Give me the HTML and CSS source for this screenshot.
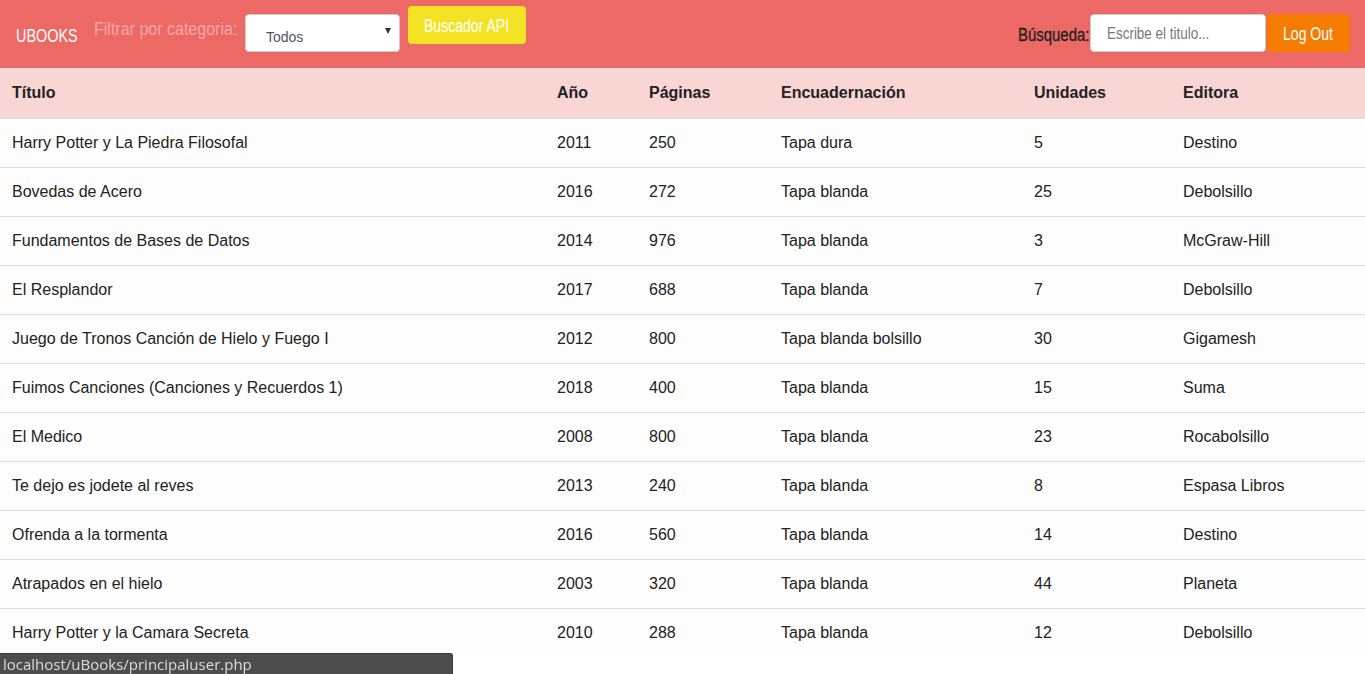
FILE: index.html
```html
<!DOCTYPE html>
<html lang="es">
<head>
<meta charset="utf-8">
<title>uBooks</title>
<link rel="stylesheet" href="styles.css">
</head>
<body>
<nav class="navbar">
  <div class="nav-left">
    <span class="brand"><span class="cond">UBOOKS</span></span>
    <span class="filter-label"><span class="cond cond-wide">Filtrar por categoria:</span></span>
    <div class="select">
      <span class="select-text">Todos</span>
      <span class="select-arrow"></span>
    </div>
    <button class="btn btn-api"><span class="cond-c">Buscador API</span></button>
  </div>
  <div class="nav-right">
    <span class="search-label"><span class="cond">Búsqueda:</span></span>
    <div class="search-input"><span class="placeholder">Escribe el titulo...</span></div>
    <button class="btn btn-logout"><span class="cond-c">Log Out</span></button>
  </div>
</nav>
<table class="books">
  <colgroup>
    <col class="c-title"><col class="c-year"><col class="c-pages"><col class="c-bind"><col class="c-units"><col class="c-pub">
  </colgroup>
  <thead>
    <tr><th>Título</th><th>Año</th><th>Páginas</th><th>Encuadernación</th><th>Unidades</th><th>Editora</th></tr>
  </thead>
  <tbody>
    <tr><td>Harry Potter y La Piedra Filosofal</td><td>2011</td><td>250</td><td>Tapa dura</td><td>5</td><td>Destino</td></tr>
    <tr><td>Bovedas de Acero</td><td>2016</td><td>272</td><td>Tapa blanda</td><td>25</td><td>Debolsillo</td></tr>
    <tr><td>Fundamentos de Bases de Datos</td><td>2014</td><td>976</td><td>Tapa blanda</td><td>3</td><td>McGraw-Hill</td></tr>
    <tr><td>El Resplandor</td><td>2017</td><td>688</td><td>Tapa blanda</td><td>7</td><td>Debolsillo</td></tr>
    <tr><td>Juego de Tronos Canción de Hielo y Fuego I</td><td>2012</td><td>800</td><td>Tapa blanda bolsillo</td><td>30</td><td>Gigamesh</td></tr>
    <tr><td>Fuimos Canciones (Canciones y Recuerdos 1)</td><td>2018</td><td>400</td><td>Tapa blanda</td><td>15</td><td>Suma</td></tr>
    <tr><td>El Medico</td><td>2008</td><td>800</td><td>Tapa blanda</td><td>23</td><td>Rocabolsillo</td></tr>
    <tr><td>Te dejo es jodete al reves</td><td>2013</td><td>240</td><td>Tapa blanda</td><td>8</td><td>Espasa Libros</td></tr>
    <tr><td>Ofrenda a la tormenta</td><td>2016</td><td>560</td><td>Tapa blanda</td><td>14</td><td>Destino</td></tr>
    <tr><td>Atrapados en el hielo</td><td>2003</td><td>320</td><td>Tapa blanda</td><td>44</td><td>Planeta</td></tr>
    <tr><td>Harry Potter y la Camara Secreta</td><td>2010</td><td>288</td><td>Tapa blanda</td><td>12</td><td>Debolsillo</td></tr>
  </tbody>
</table>
<div class="statusbar">localhost/uBooks/principaluser.php</div>
</body>
</html>
```

FILE: styles.css
```css
html, body {
  margin: 0;
  padding: 0;
  background: #ffffff;
  overflow: hidden;
}
body {
  font-family: "Liberation Sans", Arial, sans-serif;
  font-size: 16px;
  color: #222;
}
.cond {
  display: inline-block;
  white-space: nowrap;
  transform: scaleX(0.8);
  transform-origin: left center;
}
.cond-wide {
  transform: scaleX(0.89);
}
.cond-c {
  display: inline-block;
  white-space: nowrap;
  transform: scaleX(0.78);
  transform-origin: center center;
}
.navbar {
  height: 68px;
  background: #ed6965;
  display: flex;
  justify-content: space-between;
  align-items: flex-start;
}
.nav-left {
  display: flex;
  align-items: flex-start;
  padding-left: 16px;
}
.brand {
  color: #fff;
  font-size: 18px;
  line-height: 22px;
  margin-top: 25px;
  width: 78px;
  white-space: nowrap;
}
.filter-label {
  color: #f6a6a4;
  font-size: 18px;
  line-height: 22px;
  margin-top: 18px;
  width: 151px;
  white-space: nowrap;
}
.select {
  width: 155px;
  height: 38px;
  margin-top: 14px;
  box-sizing: border-box;
  background: #fff;
  border: 1px solid #ccc;
  border-radius: 4px;
  display: flex;
  align-items: center;
  justify-content: space-between;
  padding: 7px 8px 0 20px;
}
.select-text {
  color: #4c5662;
  font-size: 14px;
}
.select-arrow {
  width: 0;
  height: 0;
  border-left: 3.5px solid transparent;
  border-right: 3.5px solid transparent;
  border-top: 6px solid #333;
  margin-top: -12px;
}
.btn {
  border: 0;
  color: #fff;
  font-family: "Liberation Sans", sans-serif;
  font-size: 18px;
  border-radius: 4px;
  padding: 0;
  cursor: pointer;
  white-space: nowrap;
}
.btn-api {
  background: #f4e324;
  width: 118px;
  height: 38px;
  margin-top: 6px;
  margin-left: 8px;
  padding-top: 3px;
}
.nav-right {
  display: flex;
  align-items: flex-start;
  padding-right: 15px;
}
.search-label {
  color: #222;
  font-size: 18px;
  line-height: 22px;
  margin-top: 24px;
  width: 72px;
  white-space: nowrap;
  -webkit-text-stroke: 0.3px #222;
}
.search-label .cond {
  transform: scaleX(0.83);
}
.search-input {
  width: 176px;
  height: 38px;
  margin-top: 14px;
  box-sizing: border-box;
  background: #fff;
  border: 1px solid #ccc;
  border-radius: 4px;
  display: flex;
  align-items: center;
  padding-left: 16px;
  padding-top: 2px;
}
.placeholder {
  display: inline-block;
  color: #777;
  font-size: 16px;
  white-space: nowrap;
  transform: scaleX(0.84);
  transform-origin: left center;
}
.btn-logout {
  background: #f47c00;
  width: 83px;
  height: 38px;
  margin-top: 14px;
  margin-left: 1px;
  padding-top: 2px;
}
.books {
  width: 100%;
  border-collapse: collapse;
  table-layout: fixed;
}
.c-title { width: 545px; }
.c-year { width: 92px; }
.c-pages { width: 132px; }
.c-bind { width: 253px; }
.c-units { width: 149px; }
.c-pub { width: auto; }
.books th, .books td {
  text-align: left;
  padding: 13px 12px;
  line-height: 22px;
  white-space: nowrap;
}
.books th {
  background: #f9d5d4;
  font-weight: bold;
  color: #222;
  border-top: 1px solid #ddd;
  border-bottom: 2px solid #ddd;
}
.books td {
  border-top: 1px solid #ddd;
  background: #fdfdfd;
}
.books tbody tr:first-child td {
  border-top: 0;
}
.statusbar {
  position: fixed;
  left: 0;
  bottom: 0;
  width: 453px;
  height: 21px;
  box-sizing: border-box;
  background: #4d4d4d;
  color: #dcdcdc;
  font-family: "Open Sans", "DejaVu Sans", sans-serif;
  font-size: 15px;
  line-height: 20px;
  padding-left: 3px;
  border-top-right-radius: 3px;
  border-top: 1px solid #3a3a3a;
  border-right: 1px solid #3a3a3a;
  white-space: nowrap;
  overflow: hidden;
}
```
